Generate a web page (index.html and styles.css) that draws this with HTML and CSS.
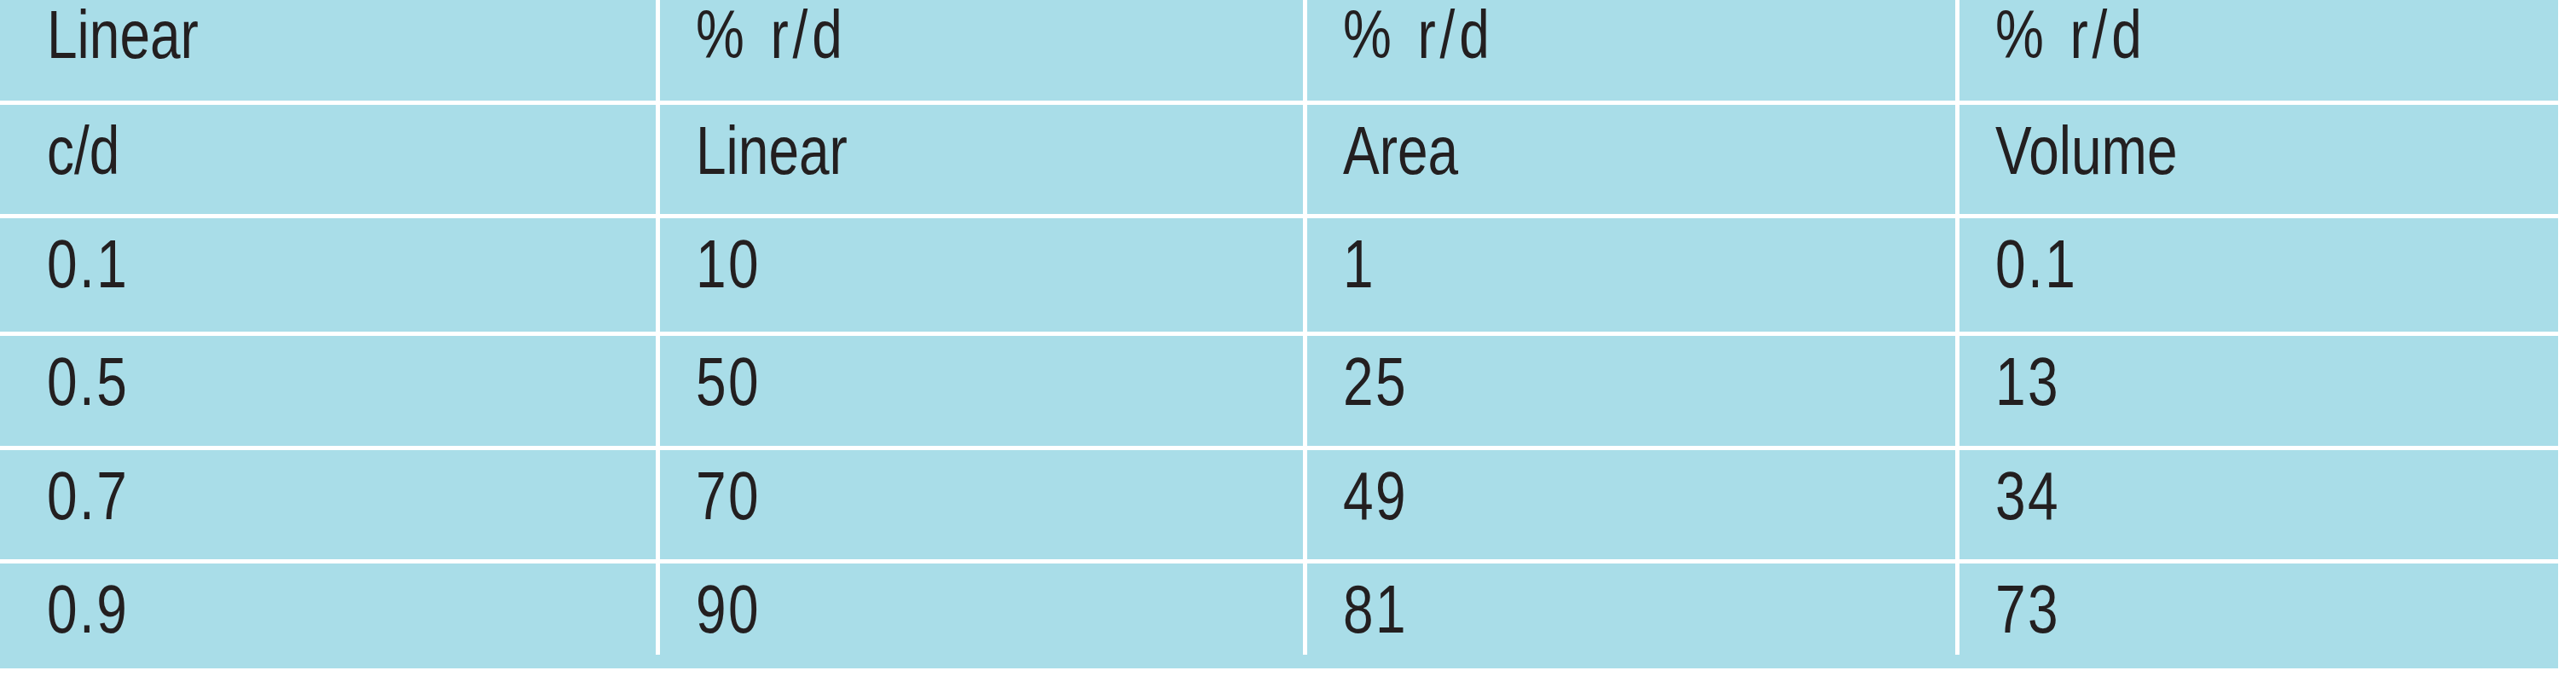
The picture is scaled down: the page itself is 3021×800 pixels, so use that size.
FILE: index.html
```html
<!DOCTYPE html>
<html lang="en">
<head>
<meta charset="utf-8">
<title>Linear, area and volume reduction</title>
<link rel="stylesheet" href="styles.css">
</head>
<body>
<div class="sheet">
  <div class="grid">
    <div class="cell cell--lead cell--top"><span class="txt">Linear</span></div>
    <div class="cell cell--top"><span class="txt txt--unit">% r/d</span></div>
    <div class="cell cell--top"><span class="txt txt--unit">% r/d</span></div>
    <div class="cell cell--top"><span class="txt txt--unit">% r/d</span></div>

    <div class="cell cell--lead"><span class="txt">c/d</span></div>
    <div class="cell"><span class="txt">Linear</span></div>
    <div class="cell"><span class="txt">Area</span></div>
    <div class="cell"><span class="txt">Volume</span></div>

    <div class="cell cell--lead"><span class="txt txt--num">0.1</span></div>
    <div class="cell"><span class="txt txt--num">10</span></div>
    <div class="cell"><span class="txt txt--num">1</span></div>
    <div class="cell"><span class="txt txt--num">0.1</span></div>

    <div class="cell cell--lead"><span class="txt txt--num">0.5</span></div>
    <div class="cell"><span class="txt txt--num">50</span></div>
    <div class="cell"><span class="txt txt--num">25</span></div>
    <div class="cell"><span class="txt txt--num">13</span></div>

    <div class="cell cell--lead"><span class="txt txt--num">0.7</span></div>
    <div class="cell"><span class="txt txt--num">70</span></div>
    <div class="cell"><span class="txt txt--num">49</span></div>
    <div class="cell"><span class="txt txt--num">34</span></div>

    <div class="cell cell--lead"><span class="txt txt--num">0.9</span></div>
    <div class="cell"><span class="txt txt--num">90</span></div>
    <div class="cell"><span class="txt txt--num">81</span></div>
    <div class="cell"><span class="txt txt--num">73</span></div>
  </div>
</div>
</body>
</html>
```

FILE: styles.css
```css
html, body {
  margin: 0;
  padding: 0;
  background: #ffffff;
}

.sheet {
  width: 3000px;
  background: #a9dde8;
  padding-bottom: 16px;
}

.grid {
  display: grid;
  grid-template-columns: 769px 754px 760px 702px;
  grid-template-rows: 118px 128px 133px 129px 128px 107px;
  gap: 5px;
  background: #ffffff;
}

.cell {
  background: #a9dde8;
  padding: 14px 0 0 42px;
  font-family: "Liberation Sans", Arial, sans-serif;
  font-size: 80px;
  line-height: 80px;
  color: #231f20;
  white-space: nowrap;
}

.cell--lead {
  padding-left: 55px;
}

.cell--top {
  padding-top: 1px;
}

.txt {
  display: inline-block;
  transform: scaleX(0.8);
  transform-origin: left center;
}

.txt--unit {
  letter-spacing: 6px;
  word-spacing: 4px;
}

.txt--num {
  letter-spacing: 3px;
}
```
